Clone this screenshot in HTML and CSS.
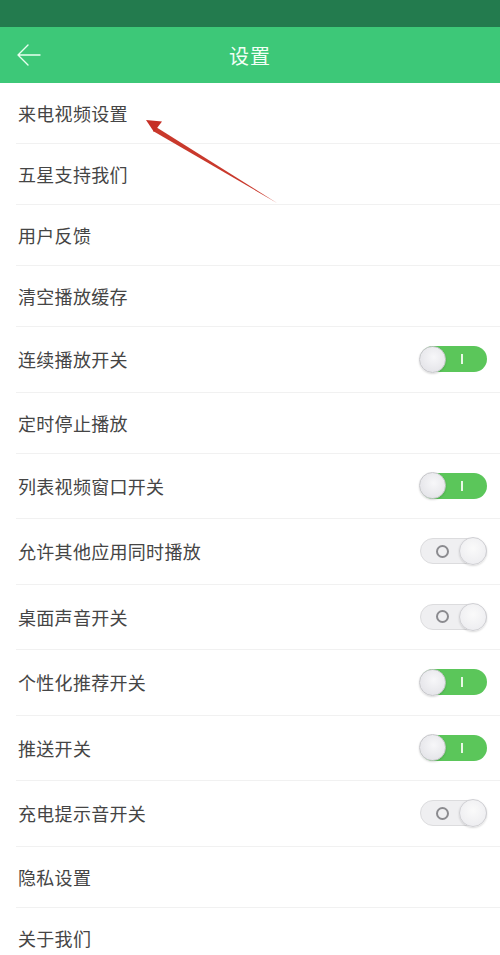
FILE: index.html
```html
<!DOCTYPE html>
<html lang="zh">
<head>
<meta charset="utf-8">
<title>设置</title>
<link rel="stylesheet" href="styles.css">
</head>
<body>
<div class="page">
  <div class="statusbar"></div>
  <header class="topbar">
    <svg class="back" width="26" height="24" viewBox="0 0 26 24"><path d="M24 12H2M12 2L2 12L12 22" fill="none" stroke="#e8fff0" stroke-width="1.4" stroke-linecap="round" stroke-linejoin="round"/></svg>
    <h1 class="title">设置</h1>
  </header>
  <ul class="list">
    <li class="row"><span class="label">来电视频设置</span></li>
    <li class="row"><span class="label">五星支持我们</span></li>
    <li class="row"><span class="label">用户反馈</span></li>
    <li class="row"><span class="label">清空播放缓存</span></li>
    <li class="row sw"><span class="label">连续播放开关</span><span class="toggle on"><span class="knob"></span><span class="mark"></span></span></li>
    <li class="row"><span class="label">定时停止播放</span></li>
    <li class="row sw"><span class="label">列表视频窗口开关</span><span class="toggle on"><span class="knob"></span><span class="mark"></span></span></li>
    <li class="row sw"><span class="label">允许其他应用同时播放</span><span class="toggle off"><span class="mark"></span><span class="knob"></span></span></li>
    <li class="row sw"><span class="label">桌面声音开关</span><span class="toggle off"><span class="mark"></span><span class="knob"></span></span></li>
    <li class="row sw"><span class="label">个性化推荐开关</span><span class="toggle on"><span class="knob"></span><span class="mark"></span></span></li>
    <li class="row sw"><span class="label">推送开关</span><span class="toggle on"><span class="knob"></span><span class="mark"></span></span></li>
    <li class="row sw"><span class="label">充电提示音开关</span><span class="toggle off"><span class="mark"></span><span class="knob"></span></span></li>
    <li class="row"><span class="label">隐私设置</span></li>
    <li class="row last"><span class="label">关于我们</span></li>
  </ul>
  <svg class="annot" width="500" height="955" viewBox="0 0 500 955">
    <path d="M277 203 L156 127 L153 131 Z" fill="#c9392c"/>
    <path d="M146 120 L162 121.5 L154 132 Z" fill="#c62f25"/>
  </svg>
</div>
</body>
</html>
```
FILE: styles.css
```css
* { box-sizing: border-box; }
html, body { margin: 0; padding: 0; background: #fff; }
body { font-family: "Noto Sans CJK SC", "Noto Sans", sans-serif; }
.page { position: relative; width: 500px; height: 955px; overflow: hidden; background: #fff; }
.statusbar { height: 27px; background: #237b4e; }
.topbar {
  height: 56px; background: #3dc878;
  display: flex; align-items: center; justify-content: center;
  position: relative;
}
.back { position: absolute; left: 16px; top: 16px; }
.title { margin: 0; font-size: 20px; font-weight: 400; color: #f2fff6; letter-spacing: 1px; }
.list { list-style: none; margin: 0; padding: 0; }
.row {
  height: 61px; margin-left: 16px; padding: 0 13px 0 2px;
  display: flex; align-items: center; justify-content: space-between;
  border-bottom: 1px solid #f1f1f1;
}
.row.sw { height: 65.5px; }
.row.last { border-bottom: none; }
.label { font-size: 18px; color: #454545; letter-spacing: 0.3px; }
.toggle {
  position: relative; width: 67px; height: 26px; border-radius: 13px;
  display: flex; align-items: center;
}
.toggle.on { background: #5bc65a; }
.toggle.off { background: #efeff1; border: 1px solid #dcdcde; justify-content: space-between; }
.knob {
  width: 27px; height: 27px; border-radius: 50%;
  background: radial-gradient(circle at 55% 40%, #f7f7f9 0%, #e6e6ea 70%, #d8d8dc 100%);
  border: 1px solid #c6c6ca;
  box-shadow: 0 1px 2px rgba(0,0,0,0.15);
}
.toggle.on .knob { margin-left: -1px; }
.toggle.off .knob { width: 28px; height: 28px; margin-right: -1px; background: radial-gradient(circle at 50% 40%, #fafafa 0%, #ededf0 80%); border-color: #cfcfd3; }
.toggle.on .mark { width: 2px; height: 10px; background: #e9f8e6; margin-left: 15px; }
.toggle.off .mark { width: 13px; height: 13px; border-radius: 50%; border: 2px solid #8b8b8f; margin-left: 15px; }
.annot { position: absolute; left: 0; top: 0; pointer-events: none; }
```
